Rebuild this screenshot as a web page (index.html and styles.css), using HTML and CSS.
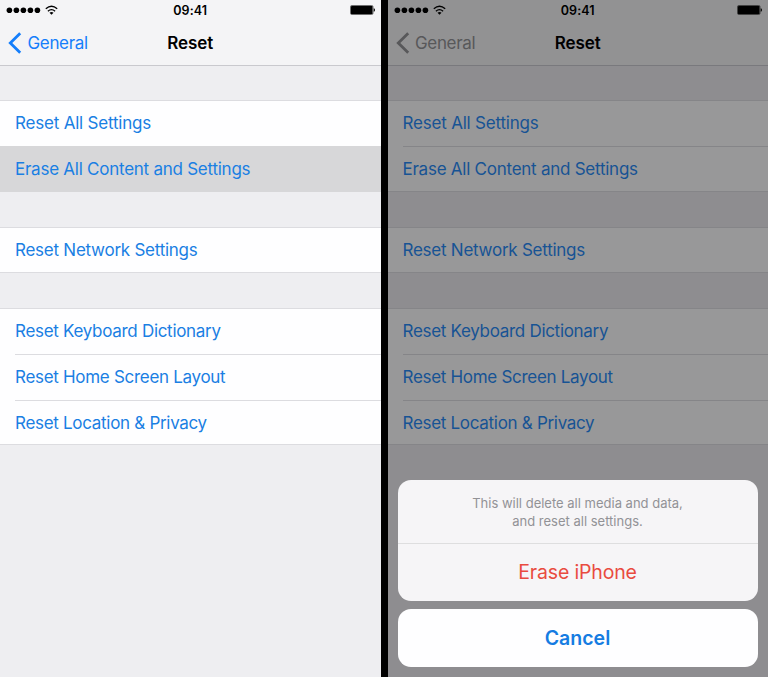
FILE: index.html
```html
<!DOCTYPE html>
<html lang="en">
<head>
<meta charset="utf-8">
<title>Reset</title>
<link rel="stylesheet" href="styles.css">
</head>
<body>
<main class="screens">
  <section class="phone">
    <header class="top">
      <div class="status">
        <svg class="signal" width="52" height="12" viewBox="0 0 52 12"><g><circle cx="3.4" cy="6.3" r="2.8"/><circle cx="10.4" cy="6.3" r="2.8"/><circle cx="17.4" cy="6.3" r="2.8"/><circle cx="24.4" cy="6.3" r="2.8"/><circle cx="31.4" cy="6.3" r="2.8"/></g><g fill="none" stroke="#000" stroke-width="1.3"><path d="M39.8 4.8Q45.5 -.4 51.2 4.8"/><path d="M41.9 7.2Q45.5 4 49.1 7.2"/></g><path d="M43.5 8.7Q45.5 7.2 47.5 8.7L45.5 10.7Z"/></svg>
        <span class="time">09:41</span>
        <svg class="battery" width="26" height="10" viewBox="0 0 26 10"><rect x=".5" y=".5" width="22.5" height="9" rx="1.3" fill="none" stroke="#000" stroke-opacity=".55"/><rect x="1" y="1" width="21.5" height="8" rx=".6"/><path d="M23.7 3.2Q25 3.5 25 5T23.7 6.8Z"/></svg>
      </div>
      <nav class="bar">
        <a class="back"><svg width="14" height="22" viewBox="0 0 14 22"><path d="M12.2 1.3L2.3 11L12.2 20.7"/></svg><span>General</span></a>
        <h1>Reset</h1>
      </nav>
    </header>
    <ul class="group">
      <li><span class="wide">Reset All Settings</span></li>
      <li class="pressed"><span>Erase All Content and Settings</span></li>
    </ul>
    <ul class="group">
      <li><span>Reset Network Settings</span></li>
    </ul>
    <ul class="group tight">
      <li><span>Reset Keyboard Dictionary</span></li>
      <li><span>Reset Home Screen Layout</span></li>
      <li><span>Reset Location &amp; Privacy</span></li>
    </ul>
  </section>
  <section class="phone inactive">
    <header class="top">
      <div class="status">
        <svg class="signal" width="52" height="12" viewBox="0 0 52 12"><g><circle cx="3.4" cy="6.3" r="2.8"/><circle cx="10.4" cy="6.3" r="2.8"/><circle cx="17.4" cy="6.3" r="2.8"/><circle cx="24.4" cy="6.3" r="2.8"/><circle cx="31.4" cy="6.3" r="2.8"/></g><g fill="none" stroke="#000" stroke-width="1.3"><path d="M39.8 4.8Q45.5 -.4 51.2 4.8"/><path d="M41.9 7.2Q45.5 4 49.1 7.2"/></g><path d="M43.5 8.7Q45.5 7.2 47.5 8.7L45.5 10.7Z"/></svg>
        <span class="time">09:41</span>
        <svg class="battery" width="26" height="10" viewBox="0 0 26 10"><rect x=".5" y=".5" width="22.5" height="9" rx="1.3" fill="none" stroke="#000" stroke-opacity=".55"/><rect x="1" y="1" width="21.5" height="8" rx=".6"/><path d="M23.7 3.2Q25 3.5 25 5T23.7 6.8Z"/></svg>
      </div>
      <nav class="bar">
        <a class="back"><svg width="14" height="22" viewBox="0 0 14 22"><path d="M12.2 1.3L2.3 11L12.2 20.7"/></svg><span>General</span></a>
        <h1>Reset</h1>
      </nav>
    </header>
    <ul class="group">
      <li><span class="wide">Reset All Settings</span></li>
      <li><span>Erase All Content and Settings</span></li>
    </ul>
    <ul class="group">
      <li><span>Reset Network Settings</span></li>
    </ul>
    <ul class="group tight">
      <li><span>Reset Keyboard Dictionary</span></li>
      <li><span>Reset Home Screen Layout</span></li>
      <li><span>Reset Location &amp; Privacy</span></li>
    </ul>
    <div class="sheet">
      <div class="card">
        <p>This will delete all media and data,<br>and reset all settings.</p>
        <button class="erase">Erase iPhone</button>
      </div>
      <button class="card cancel">Cancel</button>
    </div>
  </section>
</main>
</body>
</html>
```
FILE: styles.css
```css
* { box-sizing: border-box; }
body { margin: 0; font-family: Inter, "Liberation Sans", sans-serif; }
.screens {
  display: grid;
  grid-template-columns: 380.5px 380.5px;
  column-gap: 7px;
  height: 677px;
  background: #000;
  overflow: hidden;
}
.phone {
  --bg: #eeeef1;
  --row: #fefeff;
  --line: #dcdce0;
  --link: #1a7fe3;
  --tint: #147efb;
  --bar: #f4f4f6;
  --barline: #c9c9ce;
  background: var(--bg);
  position: relative;
}
.inactive {
  --bg: #8e8d90;
  --row: #989899;
  --line: #858588;
  --link: #175394;
  --tint: #58585a;
  --bar: #929293;
  --barline: #79797d;
}
.top { height: 66px; background: var(--bar); border-bottom: 1px solid var(--barline); }
.status {
  display: grid;
  grid-template-columns: 1fr auto 1fr;
  align-items: center;
  height: 20px;
  padding: 0 5px 0 6px;
}
.time { padding: 2px 1px 0 0; font-size: 12.5px; font-weight: 600; letter-spacing: .1px; line-height: 18px; }
.battery { justify-self: end; }
.bar { display: grid; grid-template-columns: 1fr auto 1fr; align-items: center; height: 45px; padding: 0 8px; }
.back { display: flex; align-items: center; gap: 5.5px; color: var(--tint); font-size: 17px; letter-spacing: -.35px; }
.back path { fill: none; stroke: var(--tint); stroke-width: 2.8; }
h1 { margin: 0; font-size: 17px; font-weight: 600; letter-spacing: -.1px; }
.group {
  margin: 35.5px 0 0;
  padding: 0;
  list-style: none;
  background: var(--row);
  box-shadow: inset 0 1px var(--line), inset 0 -1px var(--line);
}
.top + .group { margin-top: 34.3px; }
.group li {
  display: flex;
  align-items: center;
  height: 45.7px;
  padding-left: 15px;
  color: var(--link);
  font-size: 17px;
  letter-spacing: -.25px;
}
.group li + li:not(.pressed) { margin-left: 15px; padding-left: 0; border-top: 1px solid var(--line); }
.group .wide { letter-spacing: -.2px; }
.tight span { letter-spacing: -.3px; }
.group .pressed { background: #d7d7d9; }
.sheet { position: absolute; left: 10px; right: 10.5px; bottom: 10.3px; display: grid; gap: 8.3px; }
.card { border-radius: 13px; background: #f6f5f7; text-align: center; }
.card p { margin: 0; height: 64px; padding-top: 14px; font-size: 13px; line-height: 18px; color: #929296; border-bottom: 1px solid #dededf; }
button { display: block; width: 100%; border: 0; padding: 0; background: none; height: 57.3px; font: 400 19.5px Inter, "Liberation Sans", sans-serif; }
.erase { color: #e94b40; letter-spacing: -.15px; }
.cancel { background: #fefeff; color: #157ce2; font-weight: 600; }
```
